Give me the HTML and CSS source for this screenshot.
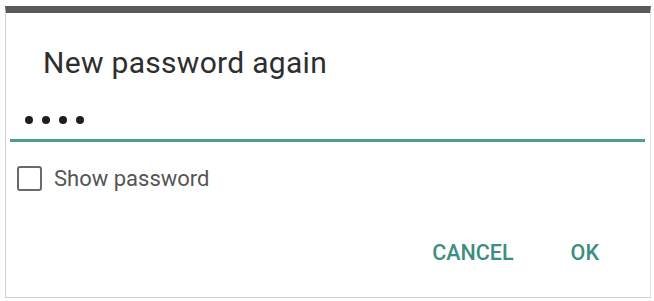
FILE: index.html
```html
<!DOCTYPE html>
<html>
<head>
<meta charset="utf-8">
<link rel="stylesheet" href="styles.css">
</head>
<body>
<div class="dialog">
  <div class="title">New password again</div>
  <div class="field">
    <span class="dot"></span><span class="dot"></span><span class="dot"></span><span class="dot"></span>
  </div>
  <div class="underline"></div>
  <label class="check">
    <span class="box"></span>
    <span class="check-label">Show password</span>
  </label>
  <div class="actions">
    <span class="btn">CANCEL</span>
    <span class="btn">OK</span>
  </div>
</div>
</body>
</html>
```
FILE: styles.css
```css
html, body {
  margin: 0;
  padding: 0;
  background: #ffffff;
}
body {
  width: 654px;
  height: 301px;
  overflow: hidden;
  font-family: Roboto, "Liberation Sans", sans-serif;
}
.dialog {
  margin: 6px 0 0 5px;
  width: 644px;
  height: 284px;
  border-top: 7px solid #5a5a5a;
  border-left: 1px solid #d2d2d2;
  border-right: 1px solid #e2e2e2;
  border-bottom: 1px solid #cfcfcf;
  background: #ffffff;
  display: flex;
  flex-direction: column;
}
.title {
  margin-top: 34px;
  padding-left: 37px;
  font-size: 30px;
  line-height: 32px;
  color: #2e2e2e;
  letter-spacing: 0.3px;
}
.field {
  margin-top: 34px;
  height: 14px;
  padding-left: 19px;
  display: flex;
  align-items: center;
  gap: 9px;
}
.dot {
  width: 8px;
  height: 8px;
  border-radius: 50%;
  background: #1e1e1e;
}
.underline {
  margin: 12px 5px 0 4px;
  height: 3px;
  background: #4e9f8f;
}
.check {
  margin-top: 24px;
  padding-left: 11px;
  display: flex;
  align-items: center;
  gap: 12px;
}
.box {
  width: 21px;
  height: 21px;
  border: 2.5px solid #6a6a6a;
  border-radius: 3px;
}
.check-label {
  font-size: 22px;
  line-height: 25px;
  color: #555555;
}
.actions {
  margin-top: 49px;
  padding-right: 51px;
  display: flex;
  justify-content: flex-end;
  gap: 57px;
}
.btn {
  font-size: 21.5px;
  line-height: 26px;
  font-weight: 500;
  color: #3d8e80;
}
```
